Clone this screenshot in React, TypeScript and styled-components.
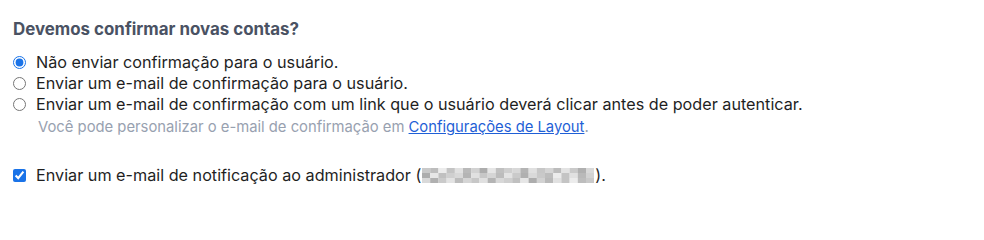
import styled, { createGlobalStyle } from "styled-components";

const GlobalStyle = createGlobalStyle`
  body {
    margin: 0;
    background: #ffffff;
    font-family: Inter, "Liberation Sans", Arial, sans-serif;
    color: #1f1f1f;
  }
`;

const SSection = styled.section`
  padding: 18px 13px 0 13px;
  display: flex;
  flex-direction: column;
`;

const STitle = styled.h3`
  margin: 0 0 12px 0;
  font-size: 16.9px;
  font-weight: 700;
  color: #4a5263;
  line-height: 22px;
`;

const SOptions = styled.div`
  display: flex;
  flex-direction: column;
`;

const SOption = styled.label`
  display: flex;
  align-items: center;
  gap: 10px;
  font-size: 16.2px;
  line-height: 21px;
  color: #1f1f1f;
`;

const SRadio = styled.input.attrs({ type: "radio" })`
  margin: 0;
  width: 13px;
  height: 13px;
  accent-color: #1a73e8;
`;

const SCheck = styled.input.attrs({ type: "checkbox" })`
  margin: 0;
  width: 13px;
  height: 13px;
  accent-color: #1a73e8;
`;

const SHelp = styled.p`
  margin: 2px 0 0 25px;
  font-size: 14.8px;
  line-height: 20px;
  color: #98a1b0;
  a {
    color: #1f5fd6;
    text-decoration: underline;
  }
`;

const SNotify = styled(SOption)`
  margin-top: 28px;
`;

const SBlur = styled.svg`
  vertical-align: -2px;
  margin: 0 1px;
`;

const blocks = [
  "#c9c9c9", "#bdbdbd", "#ececec", "#c4c4c4", "#e1e1e1", "#b9b9b9", "#d2d2d2",
  "#adadad", "#e6e6e6", "#c0c0c0", "#cfcfcf", "#d8d8d8", "#b4b4b4", "#e0e0e0",
  "#c7c7c7", "#d5d5d5", "#bcbcbc", "#e3e3e3", "#cacaca", "#b0b0b0", "#d9d9d9",
];

const Mosaic = () => (
  <SBlur width="172" height="15" viewBox="0 0 172 15">
    {blocks.map((c, i) => (
      <rect key={`t${i}`} x={i * 8.2} y={0} width={8.3} height={5} fill={c} />
    ))}
    {blocks
      .slice(7)
      .concat(blocks.slice(0, 7))
      .map((c, i) => (
        <rect key={`m${i}`} x={i * 8.2} y={5} width={8.3} height={5} fill={c} />
      ))}
    {blocks
      .slice()
      .reverse()
      .map((c, i) => (
        <rect key={`b${i}`} x={i * 8.2} y={10} width={8.3} height={5} fill={c} />
      ))}
  </SBlur>
);

export default function App() {
  return (
    <>
      <GlobalStyle />
      <SSection>
        <STitle>Devemos confirmar novas contas?</STitle>
        <SOptions>
          <SOption>
            <SRadio name="confirm" defaultChecked />
            <span>Não enviar confirmação para o usuário.</span>
          </SOption>
          <SOption>
            <SRadio name="confirm" />
            <span>Enviar um e-mail de confirmação para o usuário.</span>
          </SOption>
          <SOption>
            <SRadio name="confirm" />
            <span>
              Enviar um e-mail de confirmação com um link que o usuário deverá
              clicar antes de poder autenticar.
            </span>
          </SOption>
          <SHelp>
            Você pode personalizar o e-mail de confirmação em{" "}
            <a href="#layout">Configurações de Layout</a>.
          </SHelp>
          <SNotify>
            <SCheck defaultChecked />
            <span>
              Enviar um e-mail de notificação ao administrador (<Mosaic />).
            </span>
          </SNotify>
        </SOptions>
      </SSection>
    </>
  );
}
